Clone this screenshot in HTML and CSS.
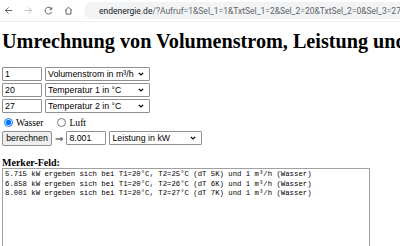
FILE: index.html
```html
<!DOCTYPE html>
<html lang="de">
<head>
    <meta charset="UTF-8" />
    <meta name="viewport" content="width=device-width, initial-scale=1.0" />
    <title>Umrechnung</title>
    <link rel="stylesheet" href="styles.css">
</head>
<body>
    <div class="toolbar">
        <svg class="nav-icon" viewBox="0 0 10 10"><path d="M9 5H1.5M5 1.5L1.5 5L5 8.5" /></svg>
        <svg class="nav-icon dim" viewBox="0 0 10 10"><path d="M1 5H8.5M5 1.5L8.5 5L5 8.5" /></svg>
        <svg class="nav-icon" viewBox="0 0 10 10"><path d="M8.3 3.2A3.8 3.8 0 1 0 8.6 6.4" /><path class="fill" d="M9 0.8V4.2H5.6Z" /></svg>
        <svg class="nav-icon" viewBox="0 0 10 10"><path d="M1 5.2L5 1.3L9 5.2M2.3 4.2V9H7.7V4.2" /></svg>
        <div class="omnibox">
            <svg class="lock" viewBox="0 0 6 8"><path d="M1.5 3.5V2.3A1.5 1.5 0 0 1 4.5 2.3V3.5" /><rect x="0.5" y="3.5" width="5" height="4" rx="0.6" /></svg>
            <span class="host">endenergie.de</span><span class="path">/?Aufruf=1&amp;Sel_1=1&amp;TxtSel_1=2&amp;Sel_2=20&amp;TxtSel_2=0&amp;Sel_3=27&amp;TxtSel_3=0&amp;Sel_4=1</span>
        </div>
    </div>

    <div class="page">
        <h1>Umrechnung von Volumenstrom, Leistung und Temperaturdifferenz</h1>

        <div class="row">
            <input type="text" class="num" value="1" />
            <select class="unit">
                <option>Volumenstrom in m³/h</option>
            </select>
        </div>
        <div class="row">
            <input type="text" class="num" value="20" />
            <select class="unit">
                <option>Temperatur 1 in °C</option>
            </select>
        </div>
        <div class="row">
            <input type="text" class="num" value="27" />
            <select class="unit">
                <option>Temperatur 2 in °C</option>
            </select>
        </div>
        <div class="medium">
            <label><input type="radio" name="medium" checked /> Wasser</label>
            <label><input type="radio" name="medium" /> Luft</label>
        </div>
        <div class="row">
            <button class="calc">berechnen</button>
            <span class="arrow">&rArr;</span>
            <input type="text" class="num result" value="8.001" />
            <select class="unit wide">
                <option>Leistung in kW</option>
            </select>
        </div>

        <p class="memo-title">Merker-Feld:</p>
        <textarea class="memo">5.715 kW ergeben sich bei T1=20°C, T2=25°C (dT 5K) und 1 m³/h (Wasser)
6.858 kW ergeben sich bei T1=20°C, T2=26°C (dT 6K) und 1 m³/h (Wasser)
8.001 kW ergeben sich bei T1=20°C, T2=27°C (dT 7K) und 1 m³/h (Wasser)</textarea>
    </div>
</body>
</html>
```

FILE: styles.css
```css
body {
    margin: 0;
    padding: 0;
    overflow: hidden;
    background: #fff;
    font-family: "Liberation Serif", "Times New Roman", serif;
    color: #000;
}

/* Browserleiste */
.toolbar {
    height: 22px;
    display: flex;
    align-items: center;
    padding-left: 4px;
    gap: 11px;
    background: #fff;
    border-bottom: 1px solid #eceef0;
    box-sizing: border-box;
}
.nav-icon {
    width: 9px;
    height: 9px;
    fill: none;
    stroke: #5f6368;
    stroke-width: 1.1;
}
.nav-icon.dim {
    stroke: #bdc1c6;
}
.nav-icon .fill {
    fill: #5f6368;
    stroke: none;
}
.omnibox {
    flex: 1;
    height: 17px;
    display: flex;
    align-items: center;
    padding-left: 10px;
    background: #f1f3f4;
    border-radius: 9px 0 0 9px;
    font-family: "Roboto", "Liberation Sans", sans-serif;
    font-size: 8.5px;
    white-space: nowrap;
    overflow: hidden;
}
.lock {
    width: 5px;
    height: 6px;
    margin-right: 5px;
    fill: #5f6368;
    stroke: #5f6368;
    stroke-width: 1;
}
.lock path {
    fill: none;
}
.host {
    color: #202124;
}
.path {
    color: #5f6368;
}

/* Seite */
.page {
    padding: 0 2px;
}
h1 {
    margin: 10px 0 15px;
    font-size: 20.2px;
    line-height: 19px;
    white-space: nowrap;
}
.row {
    display: flex;
    align-items: center;
    gap: 3px;
    height: 16px;
}
input.num, select.unit, .calc {
    box-sizing: border-box;
    height: 14px;
    font-family: "Liberation Sans", Arial, sans-serif;
    font-size: 8.8px;
    margin: 0;
    color: #000;
}
input.num {
    width: 40px;
    padding: 0 2px;
    border: 1px solid #8f8f8f;
    border-radius: 1px;
}
select.unit {
    width: 105px;
    padding: 0 12px 0 2px;
    border: 1px solid #8f8f8f;
    border-radius: 1px;
    appearance: none;
    background: #fff url("data:image/svg+xml,%3Csvg xmlns='http://www.w3.org/2000/svg' viewBox='0 0 6 4'%3E%3Cpath d='M0.8 0.8L3 3L5.2 0.8' fill='none' stroke='%23000' stroke-width='1.2'/%3E%3C/svg%3E") no-repeat right 5px center / 6px 4px;
}
select.unit.wide {
    width: 93px;
}
.medium {
    display: flex;
    gap: 14px;
    height: 16px;
    align-items: center;
    font-size: 9.6px;
    padding-left: 2px;
}
.medium label {
    display: flex;
    align-items: center;
    gap: 3px;
}
.medium input {
    margin: 0;
    width: 9px;
    height: 9px;
}
.calc {
    width: 50px;
    height: 15px;
    padding: 0;
    border: 1px solid #8f8f8f;
    border-radius: 2px;
    background: #efefef;
}
.arrow {
    font-family: "DejaVu Sans", sans-serif;
    font-size: 10px;
    color: #333;
}
.memo-title {
    margin: 11px 0 0;
    font-size: 10px;
    font-weight: bold;
}
.memo {
    width: 368px;
    height: 100px;
    box-sizing: border-box;
    margin: 0;
    padding: 1px 2px;
    border: 1px solid #a0a0a0;
    font-family: "Liberation Mono", monospace;
    font-size: 7.3px;
    line-height: 9.6px;
    resize: none;
}
```
